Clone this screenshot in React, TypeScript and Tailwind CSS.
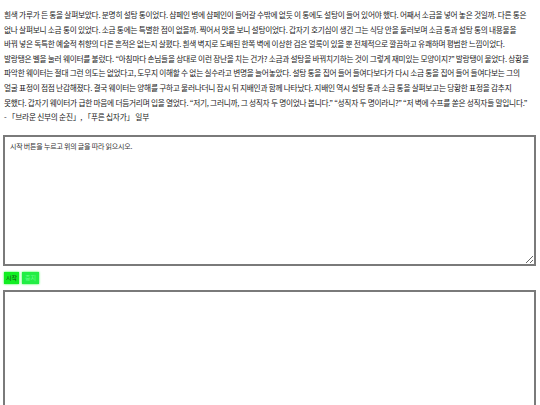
import React from 'react';

const LINES = [
  '흰색 가루가 든 통을 살펴보았다. 분명히 설탕 통이었다. 샴페인 병에 샴페인이 들어갈 수밖에 없듯 이 통에도 설탕이 들어 있어야 했다. 어째서 소금을 넣어 놓은 것일까. 다른 통은',
  '없나 살펴보니 소금 통이 있었다. 소금 통에는 특별한 점이 없을까. 찍어서 맛을 보니 설탕이었다. 갑자기 호기심이 생긴 그는 식당 안을 둘러보며 소금 통과 설탕 통의 내용물을',
  '바꿔 넣은 독특한 예술적 취향의 다른 흔적은 없는지 살폈다. 흰색 벽지로 도배된 한쪽 벽에 이상한 검은 얼룩이 있을 뿐 전체적으로 깔끔하고 유쾌하며 평범한 느낌이었다.',
  '발랑탱은 벨을 눌러 웨이터를 불렀다. “아침마다 손님들을 상대로 이런 장난을 치는 건가? 소금과 설탕을 바꿔치기하는 것이 그렇게 재미있는 모양이지?” 발랑탱이 물었다. 상황을',
  '파악한 웨이터는 절대 그런 의도는 없었다고, 도무지 이해할 수 없는 실수라고 변명을 늘어놓았다. 설탕 통을 집어 들어 들여다보다가 다시 소금 통을 집어 들어 들여다보는 그의',
  '얼굴 표정이 점점 난감해졌다. 결국 웨이터는 양해를 구하고 물러나더니 잠시 뒤 지배인과 함께 나타났다. 지배인 역시 설탕 통과 소금 통을 살펴보고는 당황한 표정을 감추지',
  '못했다. 갑자기 웨이터가 급한 마음에 더듬거리며 입을 열었다. “저기, 그러니까, 그 성직자 두 명이었나 봅니다.” “성직자 두 명이라니?” “저 벽에 수프를 쏟은 성직자들 말입니다.”',
  '- 「브라운 신부의 순진」, 「푸른 십자가」 일부',
];

export default function App() {
  return (
    <div className="w-[540px] h-[405px] overflow-hidden bg-white text-[#222] font-['Noto_Sans_CJK_KR',sans-serif]">
      <div className="pt-[8px] pl-[4px] text-[7.7px] leading-[14.6px] tracking-[-0.26px] whitespace-nowrap">
        {LINES.map((line, i) => (
          <div key={i}>{line}</div>
        ))}
      </div>

      <div className="px-[3px] pt-[10px]">
        <textarea
          readOnly
          className="block w-[533px] h-[131px] border-2 border-[#7a7a7a] px-[5px] pt-[4px] text-[7px] leading-[10px] tracking-[-0.2px] text-[#333] resize outline-none font-['Noto_Sans_CJK_KR',sans-serif]"
          defaultValue="시작 버튼을 누르고 위의 글을 따라 읽으시오."
        />
      </div>

      <div className="flex gap-[3px] pl-[4px] pt-[6px] pb-[6px]">
        <button className="h-[12px] px-[2px] bg-[#11ee22] text-[6px] leading-[12px] text-[#114411] shadow-[0_0_2px_#22ff33]">시작</button>
        <button className="h-[12px] px-[3px] bg-[#22ee44] text-[6px] leading-[12px] text-[#66ff88] shadow-[0_0_2px_#22ff33]">중지</button>
      </div>

      <div className="px-[3px]">
        <textarea
          readOnly
          className="block w-[533px] h-[140px] border-2 border-[#7a7a7a] px-[5px] py-[7px] text-[7px] resize-none outline-none"
        />
      </div>
    </div>
  );
}
